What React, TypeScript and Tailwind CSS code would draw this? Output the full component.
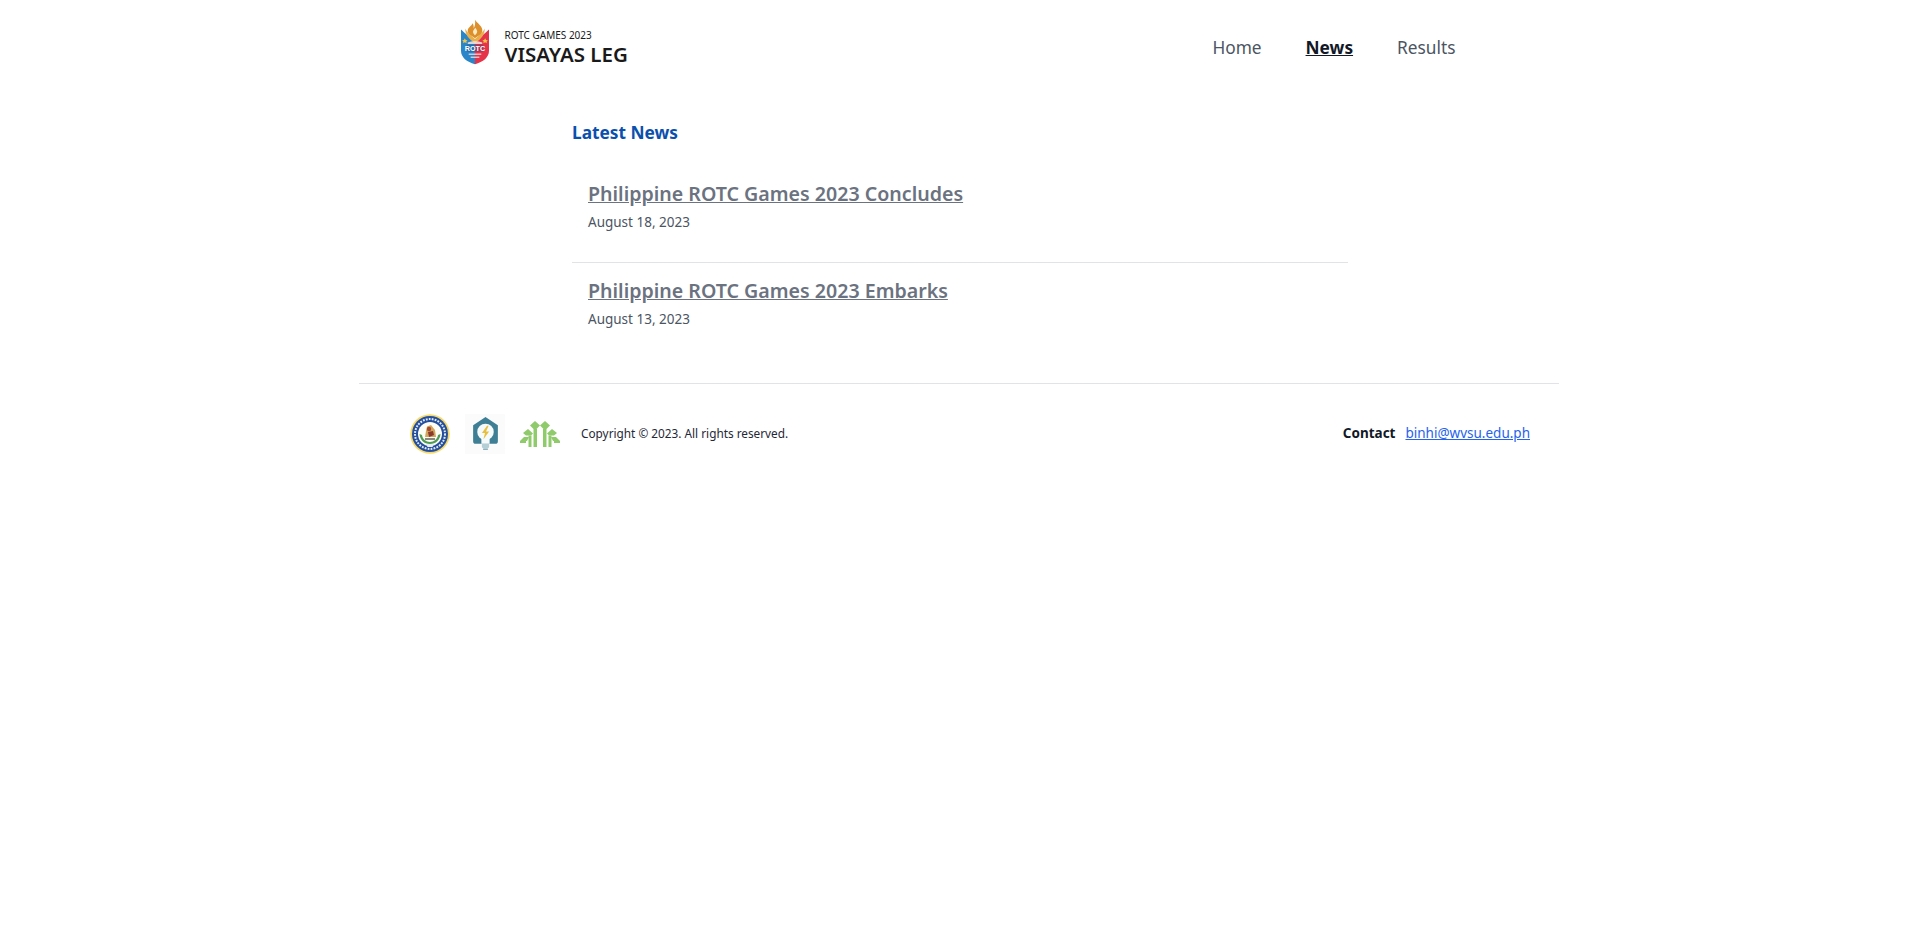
import React from "react";

const font = { fontFamily: '"Noto Sans", "Open Sans", sans-serif' };

function Shield() {
  return (
    <svg width="28" height="46" viewBox="0 0 29 46" className="mb-[12px] block">
      <path d="M0 10C3 13 7 16 14.5 22V46C6 43.5 0 39 0 32z" fill="#2a86c8" />
      <path d="M29 10C26 13 22 16 14.5 22V46C23 43.5 29 39 29 32z" fill="#e5344a" />
      <path d="M4.500 9C6 13 11 16.500 14.500 20 18 16.500 23 13 24.500 9 25 15 21 20 14.500 24 8 20 4 15 4.500 9z" fill="#e9b04a" />
      <path d="M14.500 0C17 4 23 7 22 12 21.500 15 17 17 14.500 19 12 17 7.500 15 7 12 6.500 8 10.500 7 12 3.500 13 5.500 13.500 7 13 9 14.500 7 15 3.500 14.500 0z" fill="#dc8f2b" />
      <path d="M14.500 8C16 10 17.500 11.500 16.500 13.500 16 14.500 15 15.500 14.500 16 13.500 15 12 13.500 12.500 11.500 13 10.500 14.500 9.500 14.500 8z" fill="#fbeac2" />
      <path d="M4 19l1 1.800 1.800.3-1.300 1.300.3 1.800-1.800-.9-1.800.9.3-1.800-1.300-1.300 1.800-.3z" fill="#f2c542" />
      <path d="M25 19l1 1.800 1.800.3-1.300 1.300.3 1.800-1.800-.9-1.800.9.3-1.800-1.300-1.300 1.800-.3z" fill="#f2c542" />
      <path d="M7 23.500C11 21.800 18 21.800 22 23.500V25H7z" fill="#f6e6e0" opacity="0.85" />
      <rect x="6" y="25.500" width="17" height="7.500" rx="0.8" fill="#1d3f79" opacity="0.35" />
      <text x="14.500" y="32" textAnchor="middle" fontSize="7.500" fontWeight="800" fill="#ffffff" fontFamily="Liberation Sans, sans-serif">ROTC</text>
      <path d="M8 35H21V36.500H8zM10 38H19V39.500H10z" fill="#f6dfe0" opacity="0.8" />
    </svg>
  );
}

function Seal() {
  return (
    <svg width="40" height="40" viewBox="0 0 40 40" className="block">
      <circle cx="20" cy="20" r="19.800" fill="#f7d96a" />
      <circle cx="20" cy="20" r="18" fill="#234f9e" />
      <circle cx="20" cy="20" r="15" fill="none" stroke="#e6ecf6" strokeWidth="2" strokeDasharray="1.800 1.200" />
      <circle cx="20" cy="20" r="12" fill="#fdfdf6" />
      <path d="M9.500 20C10 26 14 30 20 30S30 26 30.500 20L28 21C27.500 25 24 28 20 28S12.500 25 12 21z" fill="#4f9c55" />
      <path d="M17 12.500L21 11 25 16 26 23H15L16 17z" fill="#d2a65c" />
      <circle cx="19" cy="15" r="2.200" fill="#a84b35" />
      <path d="M18 18L23 17 24 21 19 23z" fill="#8b3b2c" />
      <rect x="15" y="24" width="10" height="2" fill="#8a8a80" />
      <path d="M16 30H24L22.500 33H17.500z" fill="#e9eef8" />
    </svg>
  );
}

function Bulb() {
  return (
    <div className="flex h-10 w-10 items-center justify-center bg-[#fbfbfb]">
      <svg width="25" height="33" viewBox="0 0 24 32" className="block">
        <path d="M12 0L24 8V23.500A2.500 2.500 0 0 1 21.500 26H2.500A2.500 2.500 0 0 1 0 23.500V8z" fill="#3f7f96" />
        <circle cx="12" cy="14.500" r="8" fill="#f5fafa" />
        <rect x="8" y="19" width="8" height="7" fill="#f5fafa" />
        <path d="M13.500 8.500L8.500 15.500h3l-1.500 6 5.500-7.500h-3l2.500-5.500z" fill="#e8bf3c" />
        <path d="M8.500 26h7v2.500a2 2 0 0 1-2 2h-3a2 2 0 0 1-2-2z" fill="#b5cfd7" />
        <rect x="9.500" y="30.500" width="5" height="1.500" rx="0.700" fill="#8fb4c0" />
      </svg>
    </div>
  );
}

function Tree() {
  return (
    <svg width="40" height="26" viewBox="0 0 40 26" className="block">
      <g fill="#8fca6b">
        <path d="M15 0l5 4.500-3.500 3.500h-3L10 4.500z" />
        <path d="M25 0l5 4.500L26.500 8h-3L20 4.500z" />
        <path d="M8 8l5 4.500-2 2H6L3 12z" />
        <path d="M32 8l5 4-3 2.500h-5l-2-2z" />
        <path d="M4 16h5l-2 4H0z" />
        <path d="M31 16h5l4 4h-7z" />
        <path d="M0 20h6v2H0zM34 20h6v2h-6z" />
        <path d="M13.500 8h3.500v18h-3.500z" />
        <path d="M23 8h3.500v18H23z" />
        <path d="M8.500 14.500h3V26h-3z" />
        <path d="M28.500 14.500h3V26h-3z" />
      </g>
    </svg>
  );
}

export default function App() {
  return (
    <div className="min-h-[939px] bg-white" style={font}>
      <header className="mx-auto flex h-[96px] w-[1200px] items-center justify-between pl-[102px] pr-[103px]">
        <div className="mt-[-1px] flex items-center gap-[16px]">
          <Shield />
          <div className="flex flex-col">
            <span className="text-[10px] leading-[14px] text-[#1a1a1a]">ROTC GAMES 2023</span>
            <span className="text-[20.500px] font-semibold leading-[25px] text-[#1a1a1a]">VISAYAS LEG</span>
          </div>
        </div>
        <nav className="mt-[-1px] flex items-center gap-[44px] text-[17.300px]">
          <a className="text-[#4b5563]">Home</a>
          <a className="font-bold text-[#111827] underline">News</a>
          <a className="text-[#4b5563]">Results</a>
        </nav>
      </header>
      <main className="ml-[572px] w-[776px] pt-[25px]">
        <h2 className="text-[17.300px] font-bold leading-[24px] text-[#0b50ad]">Latest News</h2>
        <div className="mt-[30px] border-b border-[#e1e3e6] px-4 pt-[5px] pb-[30px]">
          <a className="block text-[19.600px] font-semibold leading-[28px] text-[#6b7280] underline">Philippine ROTC Games 2023 Concludes</a>
          <p className="mt-[4px] text-[13.500px] leading-[20px] text-[#4b5563]">August 18, 2023</p>
        </div>
        <div className="px-4 pt-[14px] pb-[27px]">
          <a className="block text-[19.600px] font-semibold leading-[28px] text-[#6b7280] underline">Philippine ROTC Games 2023 Embarks</a>
          <p className="mt-[4px] text-[13.500px] leading-[20px] text-[#4b5563]">August 13, 2023</p>
        </div>
      </main>
      <footer className="ml-[359px] mt-[27px] flex h-[100px] w-[1200px] items-center justify-between border-t border-[#e1e3e6] pl-[51px] pr-[29px]">
        <div className="flex items-center gap-[15px]">
          <Seal />
          <Bulb />
          <Tree />
          <span className="ml-[6px] text-[11.800px] text-[#1f2937]">Copyright © 2023. All rights reserved.</span>
        </div>
        <div className="flex items-center gap-[10px] text-[13.500px]">
          <span className="font-bold text-[#111827]">Contact</span>
          <a className="text-[#2563eb] underline">binhi@wvsu.edu.ph</a>
        </div>
      </footer>
    </div>
  );
}
